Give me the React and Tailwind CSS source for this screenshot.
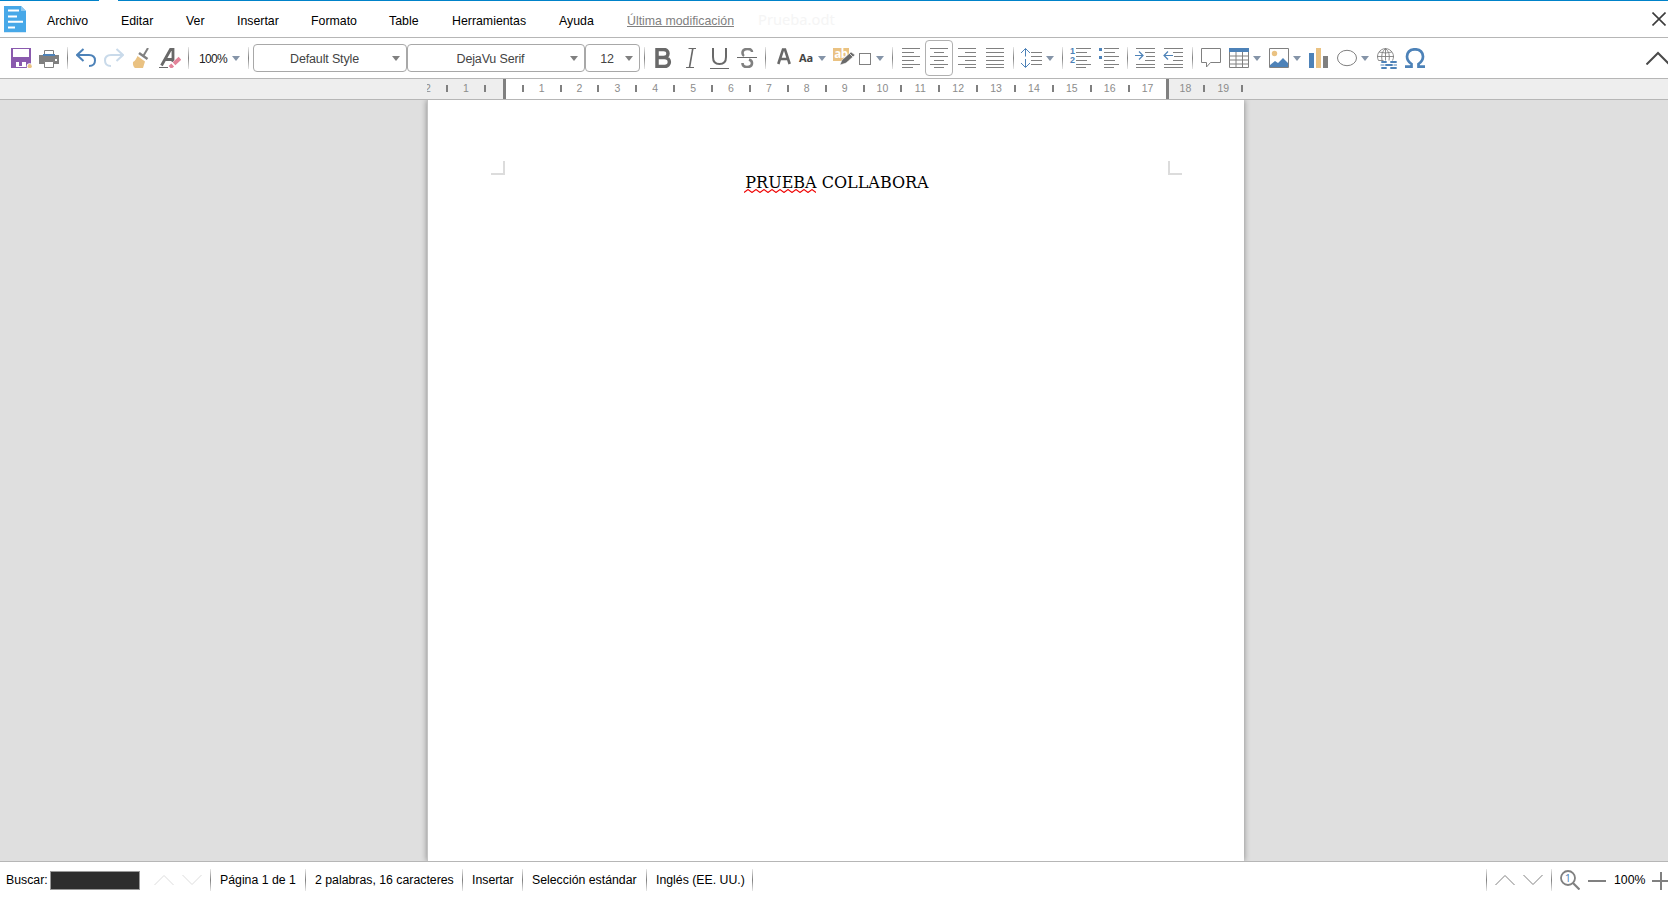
import React from "react";

const G = "#808080";
const B = "#4d82b8";
const D = "#696969";
const Y = "#eac282";

function Icon({ w = 20, h = 20, className = "", children }) {
  return (
    <svg width={w} height={h} viewBox={`0 0 ${w} ${h}`} fill="none" className={`shrink-0 ${className}`}>
      {children}
    </svg>
  );
}

function Sep({ className = "" }) {
  return <span className={`h-[22px] w-px shrink-0 bg-[linear-gradient(to_bottom,#e8e8e8,#808080_50%,#e8e8e8)] ${className}`} />;
}

function Arrow({ className = "", color = "#8594a8" }) {
  return (
    <Icon w={8} h={5} className={className}>
      <path d="M0 0h8L4 5z" fill={color} />
    </Icon>
  );
}

function Combo({ className = "", label }) {
  return (
    <div className={`flex h-7 shrink-0 items-center rounded-[4px] border border-[#a8a8a8] pl-[3px] pr-[6px] text-[12.5px] tracking-[-0.15px] text-[#444] ${className}`}>
      <span className="flex-1 whitespace-nowrap pt-[2px] text-center">{label}</span>
      <Arrow color="#808080" />
    </div>
  );
}

function Lines({ rows }) {
  return rows.map(([a, b], i) => (
    <path key={i} d={`M${a} ${[0.5, 4.5, 8.5, 12.5, 16.5, 19.5][i]}H${b}`} stroke={G} />
  ));
}

function AlignIcon({ kind, className = "" }) {
  const x = {
    left: [[0, 18], [0, 12], [0, 18], [0, 12], [0, 18], [0, 11]],
    center: [[0, 18], [4, 14], [0, 18], [4, 14], [0, 18], [4, 14]],
    right: [[0, 18], [7, 18], [0, 18], [7, 18], [0, 18], [7, 18]],
    justify: [[0, 18], [0, 18], [0, 18], [0, 18], [0, 18], [0, 18]],
  }[kind];
  return (
    <Icon w={18} className={className}>
      <Lines rows={x} />
    </Icon>
  );
}

function MenuBar() {
  return (
    <div className="flex h-9 shrink-0 items-center bg-white">
      <svg width="22" height="27" viewBox="0 0 22 27" className="ml-1 mt-px shrink-0">
        <path d="M0 0h17l5 5v21H0z" fill="#47a8e8" />
        <path d="M17 0l5 5h-5z" fill="#8cc8f0" />
        <path d="M0 26.5h22" stroke="#d6e8f5" />
        <path d="M4 4.5h11M4 10.5h9M4 15.7h15M4 21.5h7" stroke="#fff" strokeWidth="2" />
      </svg>
      <div className="ml-[21px] flex pt-[3px] text-[12.35px] leading-4 text-black">
        <span className="w-[74px]">Archivo</span>
        <span className="w-[65px]">Editar</span>
        <span className="w-[51px]">Ver</span>
        <span className="w-[74px]">Insertar</span>
        <span className="w-[78px]">Formato</span>
        <span className="w-[63px]">Table</span>
        <span className="w-[107px]">Herramientas</span>
        <span className="w-[68px]">Ayuda</span>
        <span className="w-[131px] text-[#808080] underline">Última modificación</span>
      </div>
      <span className="font-['Noto_Sans'] text-[14.7px] text-[#f5f5f5]">Prueba.odt</span>
      <Icon w={14} h={14} className="ml-auto mr-[2px]">
        <path d="M.5.5l13 13M13.5.5l-13 13" stroke="#3c3c3c" strokeWidth="1.6" />
      </Icon>
    </div>
  );
}

function Toolbar() {
  return (
    <div className="flex h-[41px] shrink-0 items-center border-t border-[#b6b6b6] bg-white">
      <Icon w={21} className="ml-[11px]">
        <path d="M0 0h20v20H0z" fill="#8a5aae" />
        <path d="M2 1h16v8H2zM5 14h10v5H5z" fill="#fff" />
        <path d="M8 14h3v4H8z" fill="#8a5aae" />
        <circle cx="18.7" cy="18.2" r="3" fill="#fff" />
        <circle cx="18.7" cy="18.2" r="2.1" fill={Y} />
      </Icon>
      <Icon className="ml-[7px]">
        <path d="M5.5 8V2.5h9V8" stroke={G} />
        <path d="M0 7h20v9H0z" fill={G} />
        <path d="M4 6h12v2H4z" fill={B} />
        <path d="M5.5 13.5h9v6h-9z" fill="#fff" stroke={G} />
        <path d="M16 11h2v2h-2z" fill="#fff" />
      </Icon>
      <Sep className="ml-2" />
      <Icon className="ml-2">
        <path d="M7.5 1L1 7l6.500 6M1.500 7H13q6 0 6 5.500T13 18" stroke={B} strokeWidth="2" />
      </Icon>
      <Icon className="ml-2">
        <path d="M12.500 1L19 7l-6.500 6M18.500 7H7q-6 0-6 5.500T7 18" stroke="#c9daea" strokeWidth="2" />
      </Icon>
      <Icon className="ml-2">
        <path d="M16 0L11 8.500" stroke={G} strokeWidth="2" />
        <path d="M7 5l8.500 6" stroke={G} strokeWidth="2.500" />
        <path d="M5.500 8l7.500 5.500-2 6.500H3q-2.500-2-2-6 2.500-1 4.500-6z" fill={Y} />
      </Icon>
      <Icon w={22} className="ml-[7px]">
        <path d="M2.500 17.500L11.500 1.500H14V14M6.500 11.500h7" stroke={D} strokeWidth="2.800" />
        <path d="M0 19.500h9" stroke={D} />
        <path d="M11 20L21.500 10.500" stroke="#fff" strokeWidth="5.500" />
        <path d="M11 19.500l2.700-2.500M15 15.800l6-5.500" stroke="#e28399" strokeWidth="4" />
      </Icon>
      <Sep className="ml-[7px]" />
      <span className="ml-[10px] w-[33px] shrink-0 pt-px text-[12px] tracking-[-0.7px] text-[#222]">100%</span>
      <Arrow />
      <Sep className="ml-2" />
      <Combo className="ml-1 w-[154px]" label="Default Style" />
      <Combo className="w-[178px]" label="DejaVu Serif" />
      <Combo className="w-[55px]" label="12" />
      <Sep className="ml-1" />
      <Icon w={17} className="ml-[10px]">
        <path d="M2 1.500h6.500c6 0 6 8 0 8H2M2 9.500h7.500c6.500 0 6.500 9 0 9H2M2 0v20" stroke={D} strokeWidth="3.500" />
      </Icon>
      <Icon w={10} className="ml-[14px]">
        <path d="M2.500.5H10M0 19.500h8" stroke={D} />
        <path d="M6.800.5L3.500 19.500" stroke={D} strokeWidth="1.600" />
      </Icon>
      <Icon w={19} h={21} className="ml-[14px]">
        <path d="M3 0v9q0 7 6.500 7T16 9V0" stroke={D} strokeWidth="2" />
        <path d="M0 20.500h19" stroke={D} />
      </Icon>
      <Icon className="ml-2">
        <path d="M15 4q0-3-4.500-3-5 0-5 4 0 2 1.500 3M12 11.500q3 1 3 3.500 0 4-5 4-4.500 0-4.500-4" stroke={G} strokeWidth="2.600" />
        <path d="M0 9.500h20" stroke={D} />
      </Icon>
      <Sep className="ml-2" />
      <Icon w={14} className="ml-[11px]">
        <path d="M1.300 16L6 1.500h2L12.700 16M3.500 11h7" stroke={D} strokeWidth="2.600" />
      </Icon>
      <span className="ml-2 w-[19px] shrink-0 font-['Open_Sans'] text-[11px] font-bold tracking-[-0.2px] text-[#444]">Aa</span>
      <Arrow />
      <div className="relative ml-[7px] h-5 w-[22px] shrink-0">
        <div className="flex h-[13px] w-4 justify-center bg-[#eac282] font-['Open_Sans'] text-[11.5px] font-bold leading-[12px] tracking-[-0.3px] text-white">ab</div>
        <svg width="22" height="20" viewBox="0 0 22 20" className="absolute left-0 top-0">
          <path d="M7 17l2-5 9-8 4 3-9 8z" fill={D} stroke="#fff" strokeWidth=".5" />
          <path d="M16.500 5.500l3.500 3.500" stroke="#fff" strokeWidth=".8" />
        </svg>
      </div>
      <span className="ml-1 mt-px h-3 w-3 shrink-0 border border-[#808080]" />
      <Arrow className="ml-[5px]" />
      <Sep className="ml-2" />
      <AlignIcon kind="left" className="ml-[9px]" />
      <div className="ml-[5px] flex h-9 w-7 shrink-0 items-center justify-center rounded-[4px] border border-[#b0b0b0]">
        <AlignIcon kind="center" />
      </div>
      <AlignIcon kind="right" className="ml-[5px]" />
      <AlignIcon kind="justify" className="ml-[10px]" />
      <Sep className="ml-[9px]" />
      <Icon w={22} className="ml-[6px]">
        <path d="M5.500.5v8M1 5L5.500.500 10 5M5.500 11v8M1 15l4.500 4.500L10 15" stroke={B} />
        <path d="M11 4.500h11M11 8.500h11M11 12.500h11M11 16.500h11" stroke={G} />
      </Icon>
      <Arrow className="ml-1" />
      <Sep className="ml-2" />
      <div className="ml-[7px] flex h-5 w-[21px] shrink-0">
        <div className="-mt-px flex w-[6px] flex-col text-[9px] font-bold leading-[8.500px] text-[#4d82b8]">
          <span>1</span>
          <span>2</span>
        </div>
        <Icon w={15}>
          <Lines rows={[[0, 15], [0, 11], [0, 15], [0, 11], [0, 15], [0, 10]]} />
        </Icon>
      </div>
      <Icon w={21} className="ml-[7px]">
        <path d="M1 0h3v3H1zM1 8h3v3H1z" fill={B} />
        <Lines rows={[[6, 21], [6, 17], [6, 21], [6, 17], [6, 21], [6, 16]]} />
      </Icon>
      <Sep className="ml-2" />
      <Icon className="ml-[7px]">
        <path d="M0 7.500h8M4 3.500l4 4-4 4" stroke={B} strokeWidth="1.200" />
        <Lines rows={[[1, 20], [10, 20], [11, 20], [10, 20], [1, 20], [1, 20]]} />
      </Icon>
      <Icon className="ml-2">
        <path d="M1 7.500h9M5 3.500l-4 4 4 4" stroke={B} strokeWidth="1.200" />
        <Lines rows={[[1, 20], [10, 20], [11, 20], [10, 20], [1, 20], [1, 20]]} />
      </Icon>
      <Sep className="ml-[9px]" />
      <Icon className="ml-2">
        <path d="M.5.5h19v14H9.500L5.500 19v-4.500h-5z" stroke={G} />
      </Icon>
      <Icon className="ml-2">
        <path d="M.5.5h19v19H.5zM7 4v16M13.500 4v16M0 8h20M0 12h20M0 16h20" stroke={G} />
        <path d="M0 0h20v4H0z" fill={B} />
      </Icon>
      <Arrow className="ml-1" />
      <Icon className="ml-2">
        <path d="M.5.5h19v19H.5z" stroke={G} />
        <circle cx="5.500" cy="5.500" r="2.700" fill={Y} />
        <path d="M1 19v-2l5-4 3 2 5-5 5 5v4z" fill={B} />
      </Icon>
      <Arrow className="ml-1" />
      <Icon w={19} className="ml-2">
        <path d="M0 5h5v15H0z" fill={B} />
        <path d="M7 0h5v20H7z" fill={Y} />
        <path d="M14 8h5v12h-5z" fill={G} />
      </Icon>
      <Icon className="ml-[9px]">
        <ellipse cx="10" cy="10" rx="9.500" ry="7.700" stroke={G} />
      </Icon>
      <Arrow className="ml-1" />
      <Icon w={21} h={21} className="ml-2">
        <path d="M1.500 12.500A8 8 0 1 1 15.500 12.500M5 12.500Q3.500 4.500 8.500.5 13.500 4.500 12 12.500M8.500 0v12.500M2 4q6.500 2 13 0M0 8.500h17M1.500 12.500h5" stroke={G} strokeWidth=".9" />
        <path d="M5 14h4M14 14h5M9 17h6M5 20h4M14 20h5" stroke={B} strokeWidth="1.900" strokeLinecap="round" />
        <path d="M3.500 17h4M16.500 17h3.500" stroke={B} strokeWidth="1" />
      </Icon>
      <Icon className="ml-[7px]">
        <path d="M0 18.700h6.500V16Q2 13 2 8.500 2.500 1.300 10 1.300T18 8.500Q18 13 13.500 16v2.700H20" stroke={B} strokeWidth="2.700" />
      </Icon>
      <Icon w={22} h={14} className="ml-auto">
        <path d="M.5 13.500L12 2l11 11" stroke="#4a4a4a" strokeWidth="2" />
      </Icon>
    </div>
  );
}

const MARKS = ["2", "1", "", "1", "2", "3", "4", "5", "6", "7", "8", "9", "10", "11", "12", "13", "14", "15", "16", "17", "18", "19"];

function Ruler() {
  return (
    <div className="flex h-[22px] shrink-0 border-y border-[#b6b6b6] bg-[#eee] pl-[427px]">
      <div className="relative h-5 w-[816px] overflow-hidden bg-[linear-gradient(to_right,#eee_76px,#fff_76px,#fff_741px,#eee_741px)]">
        <div className="-ml-[17px] flex h-[18px] w-[834px] items-center text-[10.500px] text-[#8c8c8c]">
          {MARKS.map((m, i) => (
            <React.Fragment key={i}>
              <span className="w-[35.880px] shrink-0 pt-[2px] text-center">{m}</span>
              <span className="mt-px h-[7px] w-[2px] shrink-0 bg-[#808080]" />
            </React.Fragment>
          ))}
        </div>
        <span className="absolute left-[76px] top-0 h-5 w-[3px] bg-[#808080]" />
        <span className="absolute left-[739px] top-0 h-5 w-[3px] bg-[#808080]" />
      </div>
    </div>
  );
}

function Document() {
  return (
    <div className="flex min-h-0 flex-1 overflow-hidden bg-[#dfdfdf] pl-[427px]">
      <div className="flex w-[817px] justify-between border-l border-[#c4c4c4] bg-white pl-[63px] pr-[62px] pt-[61px] shadow-[0_0_6px_rgba(0,0,0,0.4)]">
        <span className="h-[14px] w-[14px] border-b-2 border-r-2 border-[#dcdcdc]" />
        <div className="relative ml-px mt-[10px] h-6 whitespace-nowrap font-['DejaVu_Serif'] text-[16px] leading-6 text-black">
          PRUEBA COLLABORA
          <svg width="72" height="4" viewBox="0 0 72 4" className="absolute left-[-1px] top-[18px]" fill="none">
            <path d="M0 3.500l4-3 4 3 4-3 4 3 4-3 4 3 4-3 4 3 4-3 4 3 4-3 4 3 4-3 4 3 4-3 4 3 4-3 4 3" stroke="#f00000" strokeWidth="1.100" />
          </svg>
        </div>
        <span className="h-[14px] w-[14px] border-b-2 border-l-2 border-[#dcdcdc]" />
      </div>
    </div>
  );
}

function StatusBar() {
  return (
    <div className="flex h-9 shrink-0 items-center whitespace-nowrap border-t border-[#b6b6b6] bg-white text-[12.300px] text-black">
      <span className="ml-[6px] w-11 shrink-0 pt-px">Buscar:</span>
      <span className="mt-px h-[19px] w-[90px] shrink-0 border border-[#9a9a9a] bg-[#2e2e2e]" />
      <Icon h={12} className="ml-[14px]"><path d="M.5 11L10 1.500 19.500 11" stroke="#dcdcdc" /></Icon>
      <Icon h={12} className="ml-2"><path d="M.5 1L10 10.500 19.500 1" stroke="#dcdcdc" /></Icon>
      <Sep className="ml-2" />
      <span className="ml-[9px] w-[76px] pt-px">Página 1 de 1</span>
      <Sep className="ml-[9px]" />
      <span className="ml-[9px] w-[139px] pt-px">2 palabras, 16 caracteres</span>
      <Sep className="ml-[8px]" />
      <span className="ml-[9px] w-[42px] pt-px">Insertar</span>
      <Sep className="ml-[8px]" />
      <span className="ml-[9px] w-[106px] pt-px">Selección estándar</span>
      <Sep className="ml-[8px]" />
      <span className="ml-[9px] w-[88px] pt-px">Inglés (EE. UU.)</span>
      <Sep className="ml-[8px]" />
      <Sep className="ml-auto" />
      <Icon h={12} className="ml-2"><path d="M.5 11L10 1.500 19.500 11" stroke={G} /></Icon>
      <Icon h={12} className="ml-2"><path d="M.5 1L10 10.500 19.500 1" stroke={G} /></Icon>
      <Sep className="ml-2" />
      <div className="relative ml-2 h-5 w-5 shrink-0">
        <Icon><circle cx="8" cy="8" r="7" stroke={G} strokeWidth="1.800" /><path d="M13 13l6.500 6.500" stroke={G} strokeWidth="2.200" /></Icon>
        <span className="absolute left-0 top-0 w-4 text-center font-['Open_Sans'] text-[11px] leading-4 text-[#4d82b8]">1</span>
      </div>
      <span className="ml-2 mt-[3px] h-[2px] w-[18px] shrink-0 bg-[#808080]" />
      <span className="ml-2 w-[38px] shrink-0 pt-px">100%</span>
      <Icon w={16} className="mt-[2px]"><path d="M0 10h16M9 1v18" stroke={G} strokeWidth="2" /></Icon>
    </div>
  );
}

export default function App() {
  return (
    <div className="flex h-[897px] w-[1668px] flex-col overflow-hidden bg-white font-['Liberation_Sans',sans-serif]">
      <div className="flex h-px shrink-0 justify-between">
        <span className="w-[99px] bg-[#0082c9]" />
        <span className="w-[1550px] bg-[#0082c9]" />
      </div>
      <MenuBar />
      <Toolbar />
      <Ruler />
      <Document />
      <StatusBar />
    </div>
  );
}
